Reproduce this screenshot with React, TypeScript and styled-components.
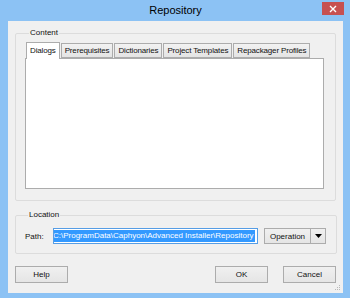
import styled, { createGlobalStyle } from "styled-components";

const GlobalStyle = createGlobalStyle`
  html, body {
    margin: 0;
    padding: 0;
    background: #8cc2f4;
  }
  body {
    font-family: "Liberation Sans", Arial, sans-serif;
  }
`;

const tabs = [
  "Dialogs",
  "Prerequisites",
  "Dictionaries",
  "Project Templates",
  "Repackager Profiles",
];

function App() {
  return (
    <>
      <GlobalStyle />
      <Window>
        <TitleBar>
          <Title>Repository</Title>
          <CloseButton>
            <svg width="8" height="8" viewBox="0 0 8 8">
              <path d="M1 1 L7 7 M7 1 L1 7" stroke="#fff" strokeWidth="1.4" />
            </svg>
          </CloseButton>
        </TitleBar>
        <Client>
          <Group>
            <Legend>Content</Legend>
            <TabRow>
              {tabs.map((t, i) => (
                <Tab key={t} active={i === 0}>
                  {t}
                </Tab>
              ))}
            </TabRow>
            <TabPanel />
          </Group>
          <LocationGroup>
            <Legend>Location</Legend>
            <PathRow>
              <Label>Path:</Label>
              <PathInput>
                <Selected>C:\ProgramData\Caphyon\Advanced Installer\Repository</Selected>
              </PathInput>
              <SplitButton>
                <span className="main">Operation</span>
                <span className="arrow">
                  <svg width="7" height="4" viewBox="0 0 7 4">
                    <path d="M0 0 H7 L3.5 4 Z" fill="#000" />
                  </svg>
                </span>
              </SplitButton>
            </PathRow>
          </LocationGroup>
          <ButtonRow>
            <Button>Help</Button>
            <Spacer />
            <Button>OK</Button>
            <Button>Cancel</Button>
          </ButtonRow>
          <Grip>
            <svg width="6" height="6" viewBox="0 0 6 6">
              <rect x="4" y="0" width="1" height="1" fill="#b8b8b8" />
              <rect x="2" y="2" width="1" height="1" fill="#b8b8b8" />
              <rect x="4" y="2" width="1" height="1" fill="#b8b8b8" />
              <rect x="0" y="4" width="1" height="1" fill="#b8b8b8" />
              <rect x="2" y="4" width="1" height="1" fill="#b8b8b8" />
              <rect x="4" y="4" width="1" height="1" fill="#b8b8b8" />
            </svg>
          </Grip>
        </Client>
      </Window>
    </>
  );
}

export default App;

const Window = styled.div`
  width: 350px;
  height: 298px;
  box-sizing: border-box;
  padding: 0 7px 5px 8px;
  display: flex;
  flex-direction: column;
  background: #8cc2f4;
`;

const TitleBar = styled.div`
  height: 21px;
  position: relative;
  display: flex;
  align-items: center;
  justify-content: center;
`;

const Title = styled.div`
  font-size: 11px;
  color: #000;
  margin-top: -1px;
`;

const CloseButton = styled.div`
  position: absolute;
  right: -1px;
  top: 2px;
  width: 22px;
  height: 13px;
  background: #c75050;
  display: flex;
  align-items: center;
  justify-content: center;
`;

const Client = styled.div`
  flex: 1;
  position: relative;
  background: #f0f0f0;
  padding: 7px 7px 0 7px;
  display: flex;
  flex-direction: column;
  font-size: 8px;
  color: #111;
`;

const Group = styled.fieldset`
  margin: 0;
  padding: 4px 11px 11px 9px;
  border: 1px solid #dcdcdc;
  border-radius: 2px;
  box-sizing: border-box;
`;

const LocationGroup = styled(Group)`
  margin-top: 9px;
  height: 44px;
  padding: 4px 10px 0 8px;
`;

const Legend = styled.legend`
  padding: 0 1px;
  margin-left: 4px;
  font-size: 8px;
  line-height: 10px;
`;

const TabRow = styled.div`
  display: flex;
  align-items: flex-end;
  height: 16px;
  padding-left: 1px;
`;

const Tab = styled.div<{ active?: boolean }>`
  box-sizing: border-box;
  height: ${(p) => (p.active ? "17px" : "15px")};
  padding: 0 3px ${(p) => (p.active ? "2px" : "0")};
  margin-bottom: ${(p) => (p.active ? "-1px" : "0")};
  margin-right: 1px;
  border: 1px solid #acacac;
  border-bottom: ${(p) => (p.active ? "none" : "1px solid #acacac")};
  background: ${(p) =>
    p.active ? "#fff" : "linear-gradient(#f2f2f2, #e4e4e4)"};
  display: flex;
  align-items: center;
  white-space: nowrap;
  letter-spacing: -0.15px;
  position: relative;
  z-index: ${(p) => (p.active ? 1 : 0)};
`;

const TabPanel = styled.div`
  box-sizing: border-box;
  height: 131px;
  background: #fff;
  border: 1px solid #acacac;
`;

const PathRow = styled.div`
  display: flex;
  align-items: center;
  margin-top: 4px;
`;

const Label = styled.span`
  width: 28px;
  padding-left: 1px;
`;

const PathInput = styled.div`
  box-sizing: border-box;
  width: 205px;
  height: 16px;
  border: 1px solid #569de5;
  background: #fff;
  overflow: hidden;
  display: flex;
  align-items: center;
  padding: 0 1px;
`;

const Selected = styled.span`
  background: #3399ff;
  color: #fff;
  white-space: nowrap;
  margin-left: -2px;
  line-height: 12px;
  padding-right: 1px;
`;

const SplitButton = styled.div`
  box-sizing: border-box;
  margin-left: 6px;
  width: 62px;
  height: 16px;
  border: 1px solid #acacac;
  background: linear-gradient(#f0f0f0, #e5e5e5);
  display: flex;
  align-items: stretch;

  .main {
    flex: 1;
    display: flex;
    align-items: center;
    justify-content: center;
    border-right: 1px solid #acacac;
  }

  .arrow {
    width: 14px;
    display: flex;
    align-items: center;
    justify-content: center;
  }
`;

const ButtonRow = styled.div`
  display: flex;
  gap: 15px;
  margin-top: 12px;
`;

const Spacer = styled.div`
  flex: 1;
`;

const Button = styled.div`
  box-sizing: border-box;
  width: 53px;
  height: 17px;
  border: 1px solid #acacac;
  background: linear-gradient(#f0f0f0, #e5e5e5);
  display: flex;
  align-items: center;
  justify-content: center;
`;

const Grip = styled.div`
  position: absolute;
  right: 2px;
  bottom: 2px;
  line-height: 0;
`;
